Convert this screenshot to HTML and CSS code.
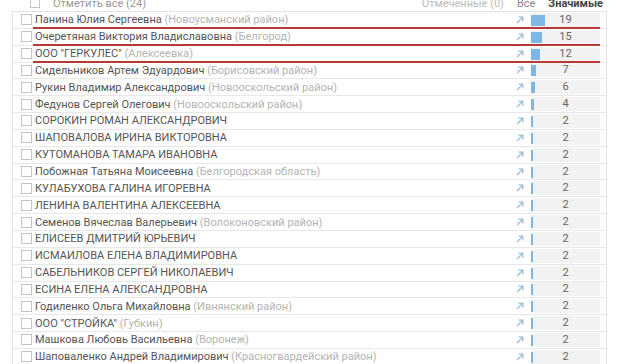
FILE: index.html
```html
<!DOCTYPE html>
<html lang="ru">
<head>
  <meta charset="UTF-8">
  <title>Участники</title>
  <link rel="stylesheet" href="styles.css">
</head>
<body>

  <div class="panel">
    <div class="toolbar">
      <label class="check-all"><span class="box"></span>Отметить все (24)</label>
      <div class="filters">
        <span class="filter muted">Отмеченные (0)</span>
        <span class="filter">Все</span>
        <span class="filter active">Значимые</span>
      </div>
    </div>

    <ul class="list" id="list">
    </ul>
  </div>

  <script>
    const rows = [
      { name: 'Панина Юлия Сергеевна', place: 'Новоусманский район', count: 19, marked: true },
      { name: 'Очеретяная Виктория Владиславовна', place: 'Белгород', count: 15, marked: true },
      { name: 'ООО "ГЕРКУЛЕС"', place: 'Алексеевка', count: 12, marked: true },
      { name: 'Сидельников Артем Эдуардович', place: 'Борисовский район', count: 7 },
      { name: 'Рукин Владимир Александрович', place: 'Новооскольский район', count: 6 },
      { name: 'Федунов Сергей Олегович', place: 'Новооскольский район', count: 4 },
      { name: 'СОРОКИН РОМАН АЛЕКСАНДРОВИЧ', count: 2 },
      { name: 'ШАПОВАЛОВА ИРИНА ВИКТОРОВНА', count: 2 },
      { name: 'КУТОМАНОВА ТАМАРА ИВАНОВНА', count: 2 },
      { name: 'Побожная Татьяна Моисеевна', place: 'Белгородская область', count: 2 },
      { name: 'КУЛАБУХОВА ГАЛИНА ИГОРЕВНА', count: 2 },
      { name: 'ЛЕНИНА ВАЛЕНТИНА АЛЕКСЕЕВНА', count: 2 },
      { name: 'Семенов Вячеслав Валерьевич', place: 'Волоконовский район', count: 2 },
      { name: 'ЕЛИСЕЕВ ДМИТРИЙ ЮРЬЕВИЧ', count: 2 },
      { name: 'ИСМАИЛОВА ЕЛЕНА ВЛАДИМИРОВНА', count: 2 },
      { name: 'САБЕЛЬНИКОВ СЕРГЕЙ НИКОЛАЕВИЧ', count: 2 },
      { name: 'ЕСИНА ЕЛЕНА АЛЕКСАНДРОВНА', count: 2 },
      { name: 'Годиленко Ольга Михайловна', place: 'Ивнянский район', count: 2 },
      { name: 'ООО "СТРОЙКА"', place: 'Губкин', count: 2 },
      { name: 'Машкова Любовь Васильевна', place: 'Воронеж', count: 2 },
      { name: 'Шаповаленко Андрей Владимирович', place: 'Красногвардейский район', count: 2 }
    ];

    const arrow = '<svg class="go" width="8" height="8" viewBox="0 0 8 8"><path d="M1 7L6.5 1.5M2.5 1.2H6.8V5.5" fill="none" stroke="currentColor" stroke-width="1.3"/></svg>';

    const list = document.getElementById('list');
    rows.forEach(row => {
      const li = document.createElement('li');
      li.className = row.marked ? 'row marked' : 'row';
      const place = row.place ? ` <span class="place">(${row.place})</span>` : '';
      li.innerHTML = `
        <span class="box"></span>
        <span class="name">${row.name}${place}</span>
        ${arrow}
        <span class="count"><span class="bar" style="width:${Math.max(1.5, row.count * 0.74)}px"></span>${row.count}</span>
      `;
      list.appendChild(li);
    });
  </script>

</body>
</html>
```

FILE: styles.css
```css
body {
  margin: 0;
  font-family: Roboto, "Liberation Sans", sans-serif;
  font-size: 11px;
  color: #555;
  background: #fff;
}
.panel {
  width: 595px;
  margin: -5px 0 0 12px;
}
.toolbar {
  display: flex;
  justify-content: space-between;
  align-items: center;
  height: 16px;
}
.check-all {
  display: flex;
  align-items: center;
  gap: 13px;
  padding-left: 18px;
  color: #9a9a9a;
}
.check-all .box {
  width: 8px;
  height: 8px;
}
.filters {
  display: flex;
  gap: 13px;
  padding-right: 4px;
}
.filter {
  color: #888;
}
.filter.muted {
  color: #bbb;
}
.filter.active {
  color: #444;
  font-weight: bold;
}
.box {
  display: inline-block;
  width: 9px;
  height: 9px;
  border: 1px solid #c4c4c4;
  background: #fff;
  flex: none;
}
.list {
  list-style-type: none;
  margin: 0;
  padding: 0;
  border: 1px solid #e2e2e2;
  border-bottom: none;
}
.row {
  position: relative;
  display: flex;
  align-items: center;
  height: 15.85px;
  padding: 0 6px 0 8px;
  border-bottom: 1px solid #e8e8e8;
}
.row .box {
  margin-right: 3px;
}
.name {
  flex: 1;
  white-space: nowrap;
  color: #555;
}
.place {
  color: #b4b4b4;
}
.go {
  color: #9dbdd4;
  margin-right: 7px;
}
.count {
  position: relative;
  width: 69px;
  height: 14px;
  background: #f2f2f2;
  text-align: center;
  line-height: 14px;
  color: #666;
}
.bar {
  position: absolute;
  left: 0;
  top: 2px;
  height: 11px;
  background: #7db7e6;
}
.marked::after {
  content: "";
  position: absolute;
  left: 20px;
  right: 6px;
  bottom: -1.5px;
  height: 2.5px;
  background: #b83a38;
}
```
